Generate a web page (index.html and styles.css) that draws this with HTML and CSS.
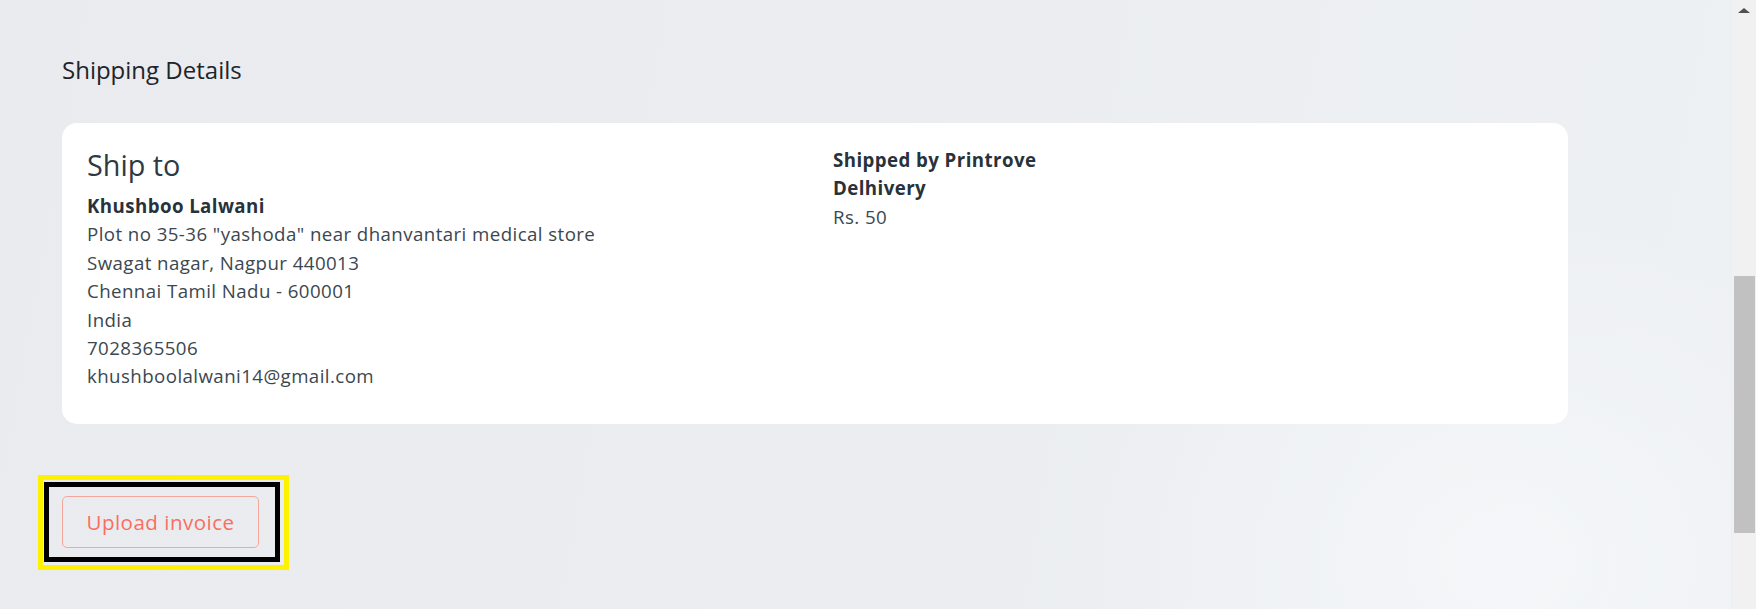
FILE: index.html
```html
<!DOCTYPE html>
<html lang="en">
<head>
<meta charset="utf-8">
<title>Shipping Details</title>
<link rel="stylesheet" href="styles.css">
</head>
<body>
<div class="layout">
  <main class="page">
    <h2 class="section-title">Shipping Details</h2>
    <section class="card">
      <div class="col-left">
        <h3 class="ship-title">Ship to</h3>
        <div class="line bold">Khushboo Lalwani</div>
        <div class="line">Plot no 35-36 "yashoda" near dhanvantari medical store</div>
        <div class="line">Swagat nagar, Nagpur 440013</div>
        <div class="line">Chennai Tamil Nadu - 600001</div>
        <div class="line">India</div>
        <div class="line">7028365506</div>
        <div class="line">khushboolalwani14@gmail.com</div>
      </div>
      <div class="col-right">
        <div class="line bold">Shipped by Printrove</div>
        <div class="line bold">Delhivery</div>
        <div class="line">Rs. 50</div>
      </div>
    </section>
    <div class="highlight">
      <div class="highlight-inner">
        <button class="upload-btn" type="button">Upload invoice</button>
      </div>
    </div>
  </main>
  <div class="scrollbar">
    <div class="scroll-arrow"></div>
    <div class="scroll-track">
      <div class="scroll-thumb"></div>
    </div>
  </div>
</div>
</body>
</html>
```

FILE: styles.css
```css
* { box-sizing: border-box; }
html, body { margin: 0; padding: 0; height: 100%; overflow: hidden; }
body {
  font-family: "Open Sans", "Liberation Sans", sans-serif;
  color: #34404a;
}
.layout {
  display: flex;
  width: 1756px;
  height: 609px;
}
.page {
  flex: 1;
  padding: 54px 0 0 62px;
  background:
    radial-gradient(ellipse 600px 500px at 1500px 560px, rgba(246,248,250,0.8), rgba(246,248,250,0) 70%),
    linear-gradient(100deg, #e9ebee 0%, #ebedf0 50%, #eef1f4 100%);
}
.section-title {
  margin: 0;
  font-size: 24px;
  font-weight: 400;
  line-height: 32px;
  color: #1f2429;
}
.card {
  margin-top: 37px;
  width: 1506px;
  height: 301px;
  background: #fff;
  border-radius: 15px;
  padding: 23px 25px 0 25px;
  display: grid;
  grid-template-columns: 746px 1fr;
}
.ship-title {
  margin: 0 0 8px 0;
  font-size: 28.8px;
  font-weight: 400;
  line-height: 38px;
  color: #2d3943;
}
.line {
  font-size: 18.7px;
  line-height: 28.4px;
  letter-spacing: 0.42px;
  color: #3b4750;
  white-space: nowrap;
}
.line.bold {
  font-weight: 700;
  color: #27323b;
}
.highlight {
  margin-top: 51px;
  margin-left: -24px;
  width: 251px;
  height: 95px;
  border: 5px solid #fff200;
  padding: 2px 4px 3px 1px;
}
.highlight-inner {
  width: 100%;
  height: 100%;
  border: 5px solid #000;
  padding: 9px 16px 0 13px;
}
.upload-btn {
  display: block;
  width: 197px;
  height: 52px;
  border: 1px solid #f5a79c;
  border-radius: 5px;
  background: transparent;
  color: #fb6e5e;
  font-family: "Open Sans", "Liberation Sans", sans-serif;
  font-size: 20.5px;
  letter-spacing: 0.5px;
  padding: 0;
}
.scrollbar {
  width: 25px;
  background: #f1f1f1;
  display: flex;
  flex-direction: column;
  align-items: center;
  border-left: 1px solid #eeeeee;
}
.scroll-arrow {
  margin-top: 8px;
  width: 0;
  height: 0;
  border-left: 6px solid transparent;
  border-right: 6px solid transparent;
  border-bottom: 5px solid #505050;
}
.scroll-track {
  flex: 1;
  width: 100%;
  padding: 263px 1px 0 1px;
}
.scroll-thumb {
  width: 21px;
  height: 257px;
  margin-left: 1px;
  background: #c1c1c1;
}
```
